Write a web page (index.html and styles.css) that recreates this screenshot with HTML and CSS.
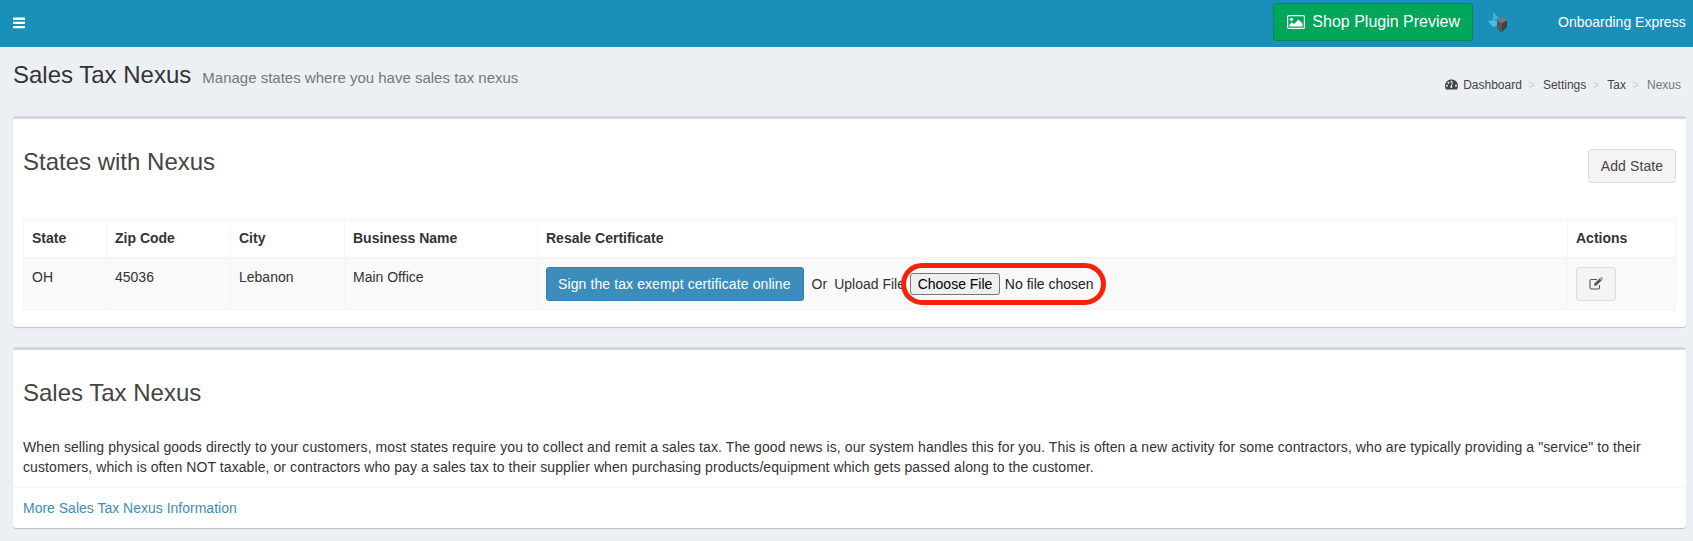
FILE: index.html
```html
<!DOCTYPE html>
<html lang="en">
<head>
<meta charset="utf-8">
<title>Sales Tax Nexus</title>
<link rel="stylesheet" href="styles.css">
</head>
<body>
<header class="topbar">
  <a class="menu-toggle" href="#" aria-label="Toggle navigation">
    <svg width="12" height="12" viewBox="0 0 12 12"><path fill="#fff" d="M0 0.500h12v2.400H0zM0 4.700h12v2.400H0zM0 8.900h12v2.400H0z"/></svg>
  </a>
  <div class="topbar-right">
    <a class="btn-preview" href="#">
      <svg class="pic-icon" width="18" height="14" viewBox="0 0 18 14"><rect x="0.600" y="0.600" width="16.800" height="12.800" rx="1" fill="none" stroke="#fff" stroke-width="1.200"/><circle cx="4.500" cy="4.300" r="1.600" fill="#fff"/><path fill="#fff" d="M2.500 11.500V9.500l2.500-2.200 2 1.700 4.500-4.600 4 4.100v3z"/></svg>
      Shop Plugin Preview
    </a>
    <svg class="logo" width="19" height="20" viewBox="0 0 19 20"><path fill="#3fb0dc" d="M5 0l6 6-6 2.500z"/><path fill="#45bde6" d="M0 9.500L5 8l5 1-1 5-4 1z"/><path fill="#54585c" d="M9 8l5 3v9l-2 0-3-4z"/><path fill="#3d4247" d="M14 11l5-3v7l-5 5z"/><path fill="#85746a" d="M9 8l5-3 5 3-5 3z"/></svg>
    <span class="account">Onboarding Express</span>
  </div>
</header>

<div class="page-head">
  <div class="titles">
    <h1>Sales Tax Nexus</h1>
    <small>Manage states where you have sales tax nexus</small>
  </div>
  <ol class="crumbs">
    <li><svg class="gauge" width="13" height="11" viewBox="0 0 13 11"><path fill="#444" fill-rule="evenodd" d="M6.500 0.500C3 0.500 0 3.200 0 7c0 1.200.3 2.300.9 3.300l.2.200h10.800l.2-.2c.6-1 .9-2.100.9-3.300 0-3.800-3-6.500-6.500-6.500zM2 7.800a1 1 0 1 1 0-2 1 1 0 0 1 0 2zm1.500-3a1 1 0 1 1 0-2 1 1 0 0 1 0 2zm3-1a1 1 0 1 1 0-2 1 1 0 0 1 0 2zm0 5.400a1.300 1.300 0 0 1-.6-2.400l1.300-3.300.7.300-1 3.200a1.300 1.300 0 0 1-.4 2.200zm4.500-1.400a1 1 0 1 1 0-2 1 1 0 0 1 0 2z"/></svg><a href="#">Dashboard</a></li>
    <li><a href="#">Settings</a></li>
    <li><a href="#">Tax</a></li>
    <li class="current">Nexus</li>
  </ol>
</div>

<main class="content">
  <section class="box">
    <div class="box-head">
      <h3>States with Nexus</h3>
      <a class="btn btn-add" href="#">Add State</a>
    </div>
    <table class="nexus">
      <thead>
        <tr>
          <th class="c-state">State</th>
          <th class="c-zip">Zip Code</th>
          <th class="c-city">City</th>
          <th class="c-biz">Business Name</th>
          <th>Resale Certificate</th>
          <th class="c-act">Actions</th>
        </tr>
      </thead>
      <tbody>
        <tr>
          <td>OH</td>
          <td>45036</td>
          <td>Lebanon</td>
          <td>Main Office</td>
          <td>
            <div class="cert">
              <a class="btn-sign" href="#">Sign the tax exempt certificate online</a>
              <span class="or">Or</span>
              <span class="upload-label">Upload File</span>
              <span class="file-wrap">
                <input class="file" type="file" aria-label="Upload File">
                <span class="ring"></span>
              </span>
            </div>
          </td>
          <td>
            <a class="btn btn-edit" href="#" aria-label="Edit">
              <svg width="14" height="13" viewBox="0 0 14 13"><path fill="none" stroke="#555" stroke-width="1.100" d="M10.500 8v2.500a1.500 1.500 0 0 1-1.500 1.500H2.500A1.500 1.500 0 0 1 1 10.500V4a1.500 1.500 0 0 1 1.500-1.500H8"/><path fill="#555" d="M10.800 1.200l2 2-5.600 5.600H5.200v-2zM11.500.5l.6-.5 1.900 1.900-.6.700z"/></svg>
            </a>
          </td>
        </tr>
      </tbody>
    </table>
  </section>

  <section class="box info">
    <h3>Sales Tax Nexus</h3>
    <p>When selling physical goods directly to your customers, most states require you to collect and remit a sales tax. The good news is, our system handles this for you. This is often a new activity for some contractors, who are typically providing a "service" to their customers, which is often NOT taxable, or contractors who pay a sales tax to their supplier when purchasing products/equipment which gets passed along to the customer.</p>
    <div class="info-foot"><a href="#">More Sales Tax Nexus Information</a></div>
  </section>
</main>
</body>
</html>
```
FILE: styles.css
```css
* { box-sizing: border-box; }
html, body { margin: 0; padding: 0; }
body {
  height: 541px;
  overflow: hidden;
  background: #ecf0f5;
  color: #333;
  font: 14px/20px "Liberation Sans", Arial, sans-serif;
}
a { text-decoration: none; color: inherit; }

.topbar {
  height: 47px;
  background: #1a8fba;
  display: flex;
  align-items: center;
  justify-content: space-between;
  padding: 0 7px 0 13px;
  color: #fff;
}
.menu-toggle { display: flex; margin-top: -1px; }
.topbar-right { display: flex; align-items: center; }
.btn-preview {
  display: flex;
  align-items: center;
  gap: 7px;
  height: 38px;
  margin-top: -3px;
  padding: 0 12px 0 13px;
  background: #00a65a;
  border: 1px solid #008d4c;
  border-radius: 3px;
  font-size: 16px;
}
.logo { margin: -3px 0 0 15px; }
.account { margin: -3px 0 0 51px; width: 128px; font-size: 14px; white-space: nowrap; }

.page-head {
  height: 69px;
  display: flex;
  justify-content: space-between;
  padding: 15px 12px 0 13px;
}
.titles { display: flex; align-items: baseline; gap: 11px; }
.titles h1 { margin: 0; font-size: 24px; font-weight: 400; line-height: 26px; color: #333; }
.titles small { font-size: 15px; color: #777; }
.crumbs {
  display: flex;
  list-style: none;
  margin: 13px 0 0;
  padding: 0;
  font-size: 12px;
  line-height: 20px;
  color: #444;
}
.crumbs li + li::before { content: ">"; color: #ccc; padding: 0 8px 0 6px; }
.crumbs .current { color: #777; }
.gauge { margin-right: 5px; vertical-align: -1px; }

.content { padding: 0 7px 0 13px; }
.box {
  display: flow-root;
  background: #fff;
  border-top: 3px solid #d2d6de;
  border-radius: 3px;
  box-shadow: 0 1px 1px rgba(0, 0, 0, .2);
  margin-bottom: 20px;
}
.box h3 { margin: 0; font-size: 24px; font-weight: 400; line-height: 26px; color: #444; }

.box-head {
  display: flex;
  justify-content: space-between;
  height: 100px;
  padding: 30px 10px 0;
}
.btn {
  display: inline-block;
  height: 34px;
  margin: 0;
  padding: 6px 11px;
  background: #f4f4f4;
  border: 1px solid #ddd;
  border-radius: 3px;
  color: #444;
  white-space: nowrap;
}
.btn-add { width: 88px; text-align: center; letter-spacing: .1px; }
.nexus {
  width: calc(100% - 20px);
  margin: 0 10px 17px;
  border-collapse: collapse;
  table-layout: fixed;
}
.nexus th, .nexus td { border: 1px solid #f4f4f4; padding: 8px; text-align: left; vertical-align: top; }
.nexus th { height: 38px; font-weight: 700; border-bottom-width: 2px; }
.nexus td { height: 50px; }
.nexus tbody tr { background: #f9f9f9; }
.c-state { width: 83px; }
.c-zip { width: 124px; }
.c-city { width: 114px; }
.c-biz { width: 193px; }
.c-act { width: 108px; }

.cert { display: flex; align-items: center; height: 34px; white-space: nowrap; }
.btn-sign {
  height: 34px;
  padding: 6px 12px 6px 11px;
  background: #3c8dbc;
  border: 1px solid #367fa9;
  border-radius: 3px;
  color: #fff;
  letter-spacing: .1px;
}
.or { margin-left: 8px; }
.upload-label { margin-left: 7px; width: 77px; }
.file-wrap { position: relative; display: flex; align-items: center; margin-left: -1px; }
.file { width: 195px; font: 14px "Liberation Sans", Arial, sans-serif; color: #222; }
.file::file-selector-button {
  height: 22px;
  margin-right: 5px;
  padding: 0 6.5px;
  background: #efefef;
  border: 1px solid #767676;
  border-radius: 3px;
  color: #000;
  font: 14px "Liberation Sans", Arial, sans-serif;
}
.ring {
  position: absolute;
  left: -9px;
  top: -10px;
  width: 205px;
  height: 42px;
  border: 5.5px solid #f6220a;
  border-radius: 21px;
  pointer-events: none;
}
.btn-edit { display: flex; align-items: center; justify-content: center; width: 40px; }

.info { margin-bottom: 0; }
.info h3 { padding: 30px 10px 0; height: 72px; }
.info p { margin: 0; padding: 15px 10px 0; height: 65px; letter-spacing: .085px; }
.info-foot { border-top: 1px solid #f4f4f4; padding: 10px; height: 41px; color: #3c8dbc; }
```
